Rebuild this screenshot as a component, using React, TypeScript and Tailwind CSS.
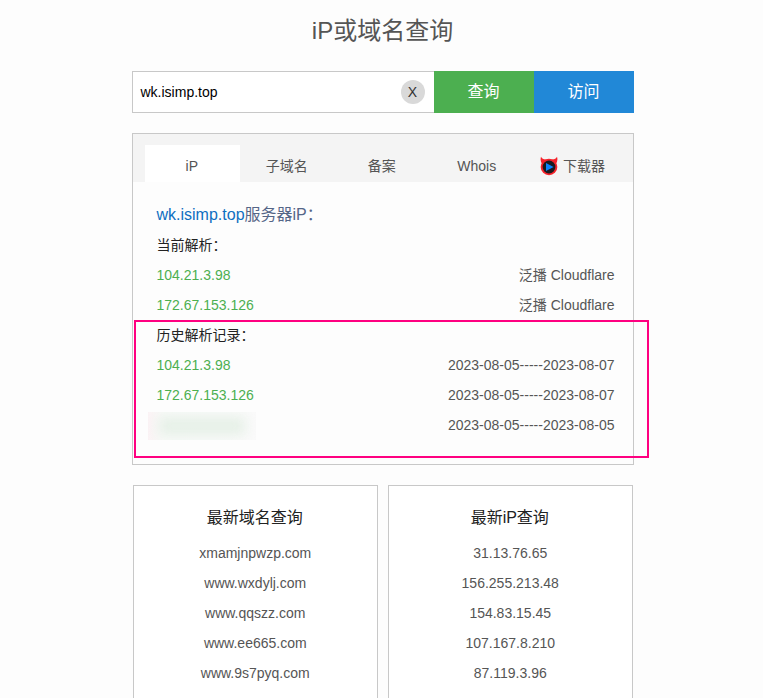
import React from "react";

const tabs = ["iP", "子域名", "备案", "Whois"];

const current = [
  ["104.21.3.98", "泛播 Cloudflare"],
  ["172.67.153.126", "泛播 Cloudflare"],
];

const domains = ["xmamjnpwzp.com", "www.wxdylj.com", "www.qqszz.com", "www.ee665.com", "www.9s7pyq.com"];
const ips = ["31.13.76.65", "156.255.213.48", "154.83.15.45", "107.167.8.210", "87.119.3.96"];

function DevilIcon() {
  return (
    <svg width="18" height="20" viewBox="0 0 18 20" className="mr-[5px] shrink-0">
      <path d="M1 0.8 Q2 3.2 6 3.6 L2.5 8.5 Q-0.3 5 1 0.8Z M17 0.8 Q16 3.2 12 3.6 L15.5 8.5 Q18.3 5 17 0.8Z" fill="#f5222a" />
      <circle cx="9" cy="11" r="8.3" fill="#f5222a" />
      <circle cx="9" cy="11" r="6.4" fill="#1b1b1f" />
      <path d="M6 7 L13.6 11 L6 15Z" fill="#0a84ff" />
    </svg>
  );
}

function Record({ ip, info }: { ip: string; info: string }) {
  return (
    <div className="flex h-[30px] items-center justify-between">
      <span className="text-[#4caf50]">{ip}</span>
      <span>{info}</span>
    </div>
  );
}

function LatestCard({ title, items }: { title: string; items: string[] }) {
  return (
    <section className="h-[260px] w-[245px] border border-[#c8c8c8] bg-white pr-[0.5px] pt-[11px] text-center">
      <h2 className="h-[41px] pr-px text-[16px] leading-[41px] text-[#222]">{title}</h2>
      {items.map((item) => (
        <div key={item} className="h-[30px] leading-[30px]">{item}</div>
      ))}
    </section>
  );
}

export default function App() {
  return (
    <main className="h-[698px] overflow-hidden bg-[#fdfdfd] pl-[132px] font-['Liberation_Sans','Noto_Sans_CJK_SC',sans-serif] text-[14px] text-[#555]">
      <h1 className="h-[71px] w-[501px] pt-[11px] text-center text-[24px] leading-[40px]">iP或域名查询</h1>

      <div className="flex h-[42px] w-[502px]">
        <div className="flex w-[302px] items-center justify-between border border-r-0 border-[#c8c8c8] bg-white pl-[7.5px] pr-[9px] text-black">
          <span>wk.isimp.top</span>
          <span className="flex size-6 items-center justify-center rounded-full bg-[#d9d9d9] pr-px text-[#333]">X</span>
        </div>
        <button className="w-[100px] bg-[#4caf50] pb-px pr-px text-[16px] leading-[41px] text-white">查询</button>
        <button className="w-[100px] bg-[#2188d7] pb-px pr-px text-[16px] leading-[41px] text-white">访问</button>
      </div>

      <section className="relative mt-5 h-[332px] w-[502px] border border-[#c8c8c8]">
        <nav className="flex h-12 bg-[#f4f4f4] pl-3 pt-[11px]">
          {tabs.map((tab, i) => (
            <div
              key={tab}
              className={`flex w-[95px] items-center justify-center pr-[1.5px] pt-[5px] ${i === 0 ? "bg-white" : ""}`}
            >
              {tab}
            </div>
          ))}
          <div className="flex w-[95px] items-center justify-center pt-[5px]">
            <DevilIcon />
            <span>下载器</span>
          </div>
        </nav>

        <div className="pl-[23.5px] pr-[18.5px] pt-[17px]">
          <h2 className="h-[31px] text-[16px] leading-[31px] text-[#556688]">
            <span className="text-[#0f6fc1]">wk.isimp.top</span>服务器iP：
          </h2>
          <div className="h-[30px] leading-[30px] text-[#222]">当前解析：</div>
          {current.map(([ip, info]) => (
            <Record key={ip} ip={ip} info={info} />
          ))}
          <div className="h-[30px] leading-[30px] text-[#222]">历史解析记录：</div>
          <Record ip="104.21.3.98" info="2023-08-05-----2023-08-07" />
          <Record ip="172.67.153.126" info="2023-08-05-----2023-08-07" />
          <div className="flex h-[30px] items-center justify-between">
            <div className="-ml-[8.5px] mt-0.5 flex h-7 w-[108px] items-center justify-center overflow-hidden bg-gradient-to-r from-[#fbf3f5] via-[#f8faf8] via-15% to-[#fafafa]">
              <div className="h-[18px] w-[86px] bg-[#e6f0e7] blur-[6px]" />
            </div>
            <span>2023-08-05-----2023-08-05</span>
          </div>
        </div>

        <div className="absolute left-px top-[186px] h-[138px] w-[515px] border-2 border-[#ff0080]" />
      </section>

      <div className="ml-px mt-5 flex gap-2.5">
        <LatestCard title="最新域名查询" items={domains} />
        <LatestCard title="最新iP查询" items={ips} />
      </div>
    </main>
  );
}
